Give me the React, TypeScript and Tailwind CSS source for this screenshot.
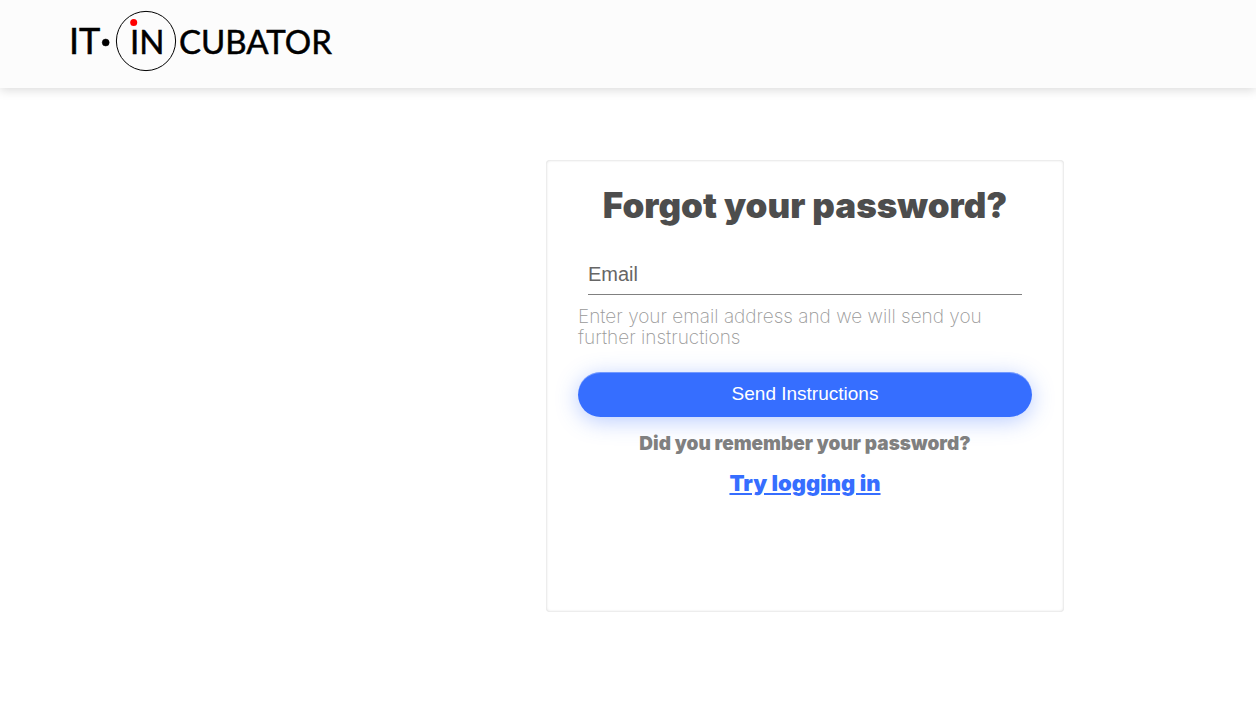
function Logo() {
  return (
    <svg
      width="272"
      height="64"
      viewBox="0 0 272 64"
      role="img"
      aria-label="IT-Incubator"
      className="block"
      fontFamily="Lato, 'Open Sans', sans-serif"
      fontSize="33"
      fill="#000"
      stroke="#000"
      strokeWidth="0.5"
    >
      <text x="1" y="46" fontSize="36">IT</text>
      <circle cx="37.700" cy="34.500" r="3.500" />
      <circle cx="78" cy="33" r="29.600" fill="none" strokeWidth="1" />
      <text x="62" y="46">IN</text>
      <circle cx="65.700" cy="14.500" r="3.500" fill="#f00" stroke="none" />
      <text x="111" y="46">CUBATOR</text>
    </svg>
  );
}

export default function App() {
  return (
    <div className="min-h-screen bg-white font-['Inter',sans-serif]">
      <header className="flex h-22 items-center bg-[#fcfcfc] px-17 pb-2 shadow-[0_2px_10px_rgba(0,0,0,0.15)]">
        <a href="#home">
          <Logo />
        </a>
      </header>
      <main className="flex justify-end pt-18 pr-48">
        <form
          className="flex h-[452px] w-[518px] flex-col items-center rounded-sm bg-white px-8 pt-6 shadow-[inset_0_0_3px_rgba(0,0,0,0.2)]"
          onSubmit={(event) => event.preventDefault()}
        >
          <h1 className="text-[35px] leading-[42px] font-black whitespace-nowrap text-[#4d4d4d]">
            Forgot your password?
          </h1>
          <div className="mt-[30px] w-full px-[10px]">
            <input
              type="email"
              aria-label="Email"
              aria-describedby="email-help"
              placeholder="Email"
              className="block h-[39px] w-full border-b border-[#808080] bg-transparent pb-px font-['Liberation_Sans',Arial,sans-serif] text-xl text-[#4d4d4d] outline-none placeholder:text-[#666]"
            />
          </div>
          <p id="email-help" className="mt-[11px] w-full text-[19px] leading-[21px] font-extralight text-[#999]">
            Enter your email address and we will send you further instructions
          </p>
          <button
            type="submit"
            className="mt-6 h-[45px] w-full rounded-full bg-[#366eff] pb-px font-['Liberation_Sans',Arial,sans-serif] text-[19px] text-white shadow-[0_4px_22px_rgba(54,110,255,0.35),inset_0_1px_0_rgba(255,255,255,0.3)]"
          >
            Send Instructions
          </button>
          <p className="mt-4 text-[19px] leading-[22px] font-black text-[#808080]">
            Did you remember your password?
          </p>
          <a href="#login" className="mt-4 text-[22px] leading-6 font-black text-[#366eff] underline">
            Try logging in
          </a>
        </form>
      </main>
    </div>
  );
}
